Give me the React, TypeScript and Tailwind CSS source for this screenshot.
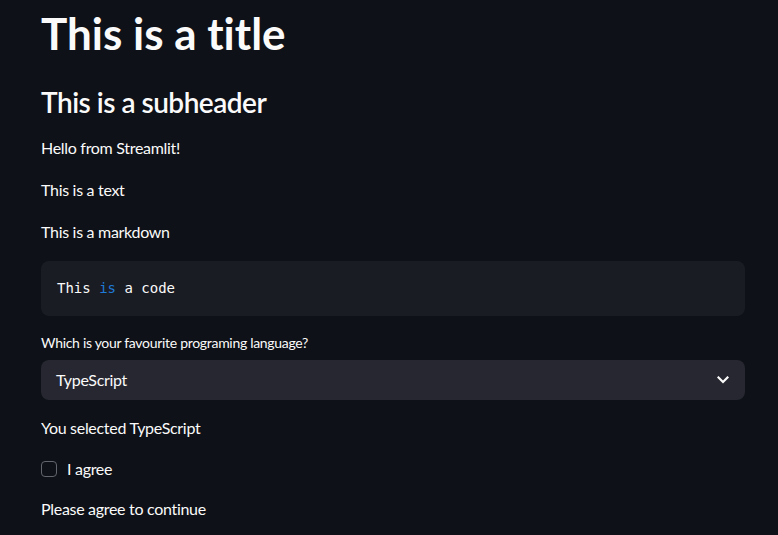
import React from "react";

export default function App() {
  return (
    <div
      className="min-h-[535px] bg-[#0e1117] text-[#fafafa] [font-variant-ligatures:none]"
      style={{ fontFamily: "Lato, 'Liberation Sans', sans-serif" }}
    >
      <div className="flex flex-col px-[41px] w-[786px] pt-[6px] tracking-[-0.3px]">
        <h1 className="h-[52px] leading-[52px] text-[44px] font-bold tracking-[0px] pt-[1px]">This is a title</h1>
        <h3 className="mt-[26px] h-[36px] leading-[36px] text-[28px] font-semibold tracking-[-0.5px]">This is a subheader</h3>
        <p className="mt-[16px] h-[24px] leading-[24px] text-[16px]">Hello from Streamlit!</p>
        <p className="mt-[18px] h-[24px] leading-[24px] text-[16px]">This is a text</p>
        <p className="mt-[18px] h-[24px] leading-[24px] text-[16px]">This is a markdown</p>
        <div className="mt-[17px] h-[55px] rounded-lg bg-[#1a1c24] flex items-center px-4 tracking-normal">
          <code
            className="text-[14px] leading-[20px] text-[#fafafa] -mt-[1px]"
            style={{ fontFamily: "'DejaVu Sans Mono', 'Liberation Mono', monospace" }}
          >
            This <span className="text-[#1f7ad8]">is</span> a code
          </code>
        </div>
        <label className="mt-[17px] h-[20px] leading-[20px] text-[14px]">Which is your favourite programing language?</label>
        <div className="mt-[7px] h-[40px] rounded-lg bg-[#262730] flex items-center justify-between pl-[15px] pr-[16px]">
          <span className="text-[16px]">TypeScript</span>
          <svg width="12" height="8" viewBox="0 0 12 8" fill="none">
            <path d="M1.5 1.5 L6 6 L10.5 1.5" stroke="#fafafa" strokeWidth="2.2" strokeLinecap="square" />
          </svg>
        </div>
        <p className="mt-[16px] h-[24px] leading-[24px] text-[16px]">You selected TypeScript</p>
        <div className="mt-[17px] h-[24px] flex items-center gap-[10px]">
          <div className="w-[16px] h-[16px] rounded-[4px] border border-[#63666f] bg-[#0e1117]" />
          <span className="text-[16px] leading-[24px]">I agree</span>
        </div>
        <p className="mt-[16px] h-[24px] leading-[24px] text-[16px]">Please agree to continue</p>
      </div>
    </div>
  );
}
